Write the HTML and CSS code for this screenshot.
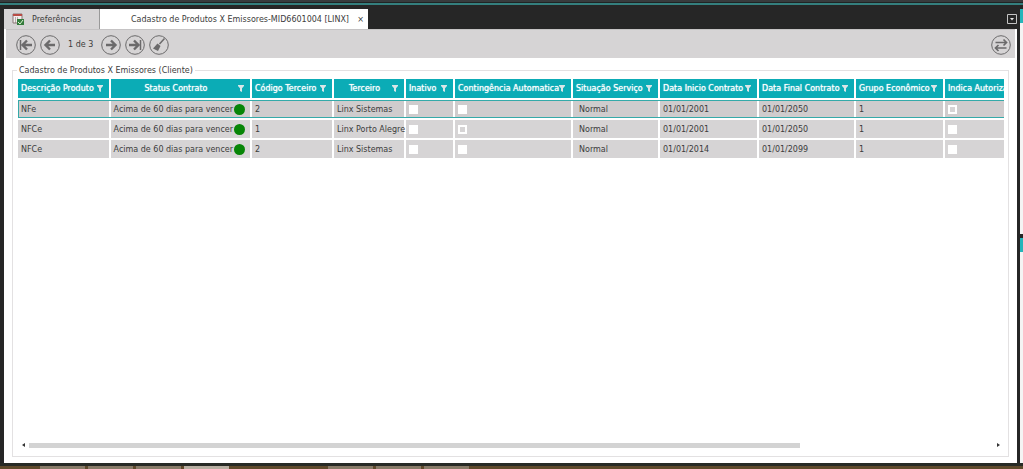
FILE: index.html
```html
<!DOCTYPE html>
<html lang="pt-BR">
<head>
<meta charset="utf-8">
<title>Cadastro de Produtos X Emissores</title>
<link rel="stylesheet" href="styles.css">
</head>
<body>
<svg width="0" height="0" class="defs" aria-hidden="true">
  <symbol id="funnel" viewBox="0 0 6 7"><path d="M0 0h6v1L4 3.200V7L2 6V3.200L0 1z" fill="#d9e6e8"/></symbol>
</svg>
<div class="window-edge"></div>
<div class="workspace">
  <main class="window">
    <nav class="tabs">
      <button class="tab tab-home" type="button">
        <svg class="tab-icon" viewBox="0 0 12 12"><path d="M1 1h9v9H1z" fill="#f2eeee" stroke="#8b7777"/><path d="M1 1h9v2H1z" fill="#b94c45"/><path d="M3 5h1M5 5h1M3 7h1M3 9h1" stroke="#806b6b"/><path d="M5 6h7v6H5z" fill="#347b3c"/><path d="M6 9l2 2 3-4" stroke="#dff5d5" fill="none"/></svg>
        <span>Preferências</span>
      </button>
      <div class="tab tab-active"><span>Cadastro de Produtos X Emissores-MID6601004 [LINX]</span><button class="close" type="button" aria-label="Fechar">×</button></div>
      <button class="tab-menu" type="button" aria-label="Lista de abas"><svg viewBox="0 0 10 10"><path d="M.5.500h9v9h-9z" fill="none" stroke="#c4c4c4"/><path d="M3 4h4L5 6.500z" fill="#e4e4e4"/></svg></button>
    </nav>
    <div class="content">
      <div class="toolbar">
        <button class="round" type="button" aria-label="Primeiro"><svg viewBox="0 0 20 20"><circle cx="10" cy="10" r="9.300"/><path class="thin" d="M4.500 5v10"/><path class="bold" d="M16 10H7M11 5.500L6.500 10l4.500 4.500"/></svg></button>
        <button class="round" type="button" aria-label="Anterior"><svg viewBox="0 0 20 20"><circle cx="10" cy="10" r="9.300"/><path class="bold" d="M15 10H6M10 5.500L5.500 10l4.500 4.500"/></svg></button>
        <span class="counter">1 de 3</span>
        <button class="round" type="button" aria-label="Próximo"><svg viewBox="0 0 20 20"><circle cx="10" cy="10" r="9.300"/><path class="bold" d="M5 10h9M10 5.500l4.500 4.500-4.500 4.500"/></svg></button>
        <button class="round" type="button" aria-label="Último"><svg viewBox="0 0 20 20"><circle cx="10" cy="10" r="9.300"/><path class="thin" d="M15.500 5v10"/><path class="bold" d="M4 10h9M9 5.500l4.500 4.500L9 14.500"/></svg></button>
        <button class="round" type="button" aria-label="Limpar"><svg viewBox="0 0 20 20"><circle cx="10" cy="10" r="9.300"/><path class="thin" d="M15.500 3.500L10.500 9"/><path class="solid" d="M8.500 8.500l3 2.500-2.500 5L4 13.500z"/></svg></button>
        <button class="round swap" type="button" aria-label="Alternar"><svg viewBox="0 0 20 20"><circle cx="10" cy="10" r="9.300"/><path class="mid" d="M4.500 7.500H15M12.500 4.500l3 3-3 3M15.500 13H5M7.500 10l-3 3 3 3"/></svg></button>
      </div>
      <fieldset class="group">
        <legend>Cadastro de Produtos X Emissores (Cliente)</legend>
        <div class="grid-view">
          <table>
            <colgroup><col class="c1"><col class="c2"><col class="c3"><col class="c4"><col class="c5"><col class="c6"><col class="c7"><col class="c8"><col class="c9"><col class="c10"><col class="c11"></colgroup>
            <thead><tr>
              <th><div class="head"><span>Descrição Produto</span><svg><use href="#funnel"/></svg></div></th>
              <th><div class="head centered"><span>Status Contrato</span><svg><use href="#funnel"/></svg></div></th>
              <th><div class="head"><span>Código Terceiro</span><svg><use href="#funnel"/></svg></div></th>
              <th><div class="head centered"><span>Terceiro</span><svg><use href="#funnel"/></svg></div></th>
              <th><div class="head"><span>Inativo</span><svg><use href="#funnel"/></svg></div></th>
              <th><div class="head"><span>Contingência Automatica</span><svg><use href="#funnel"/></svg></div></th>
              <th><div class="head"><span>Situação Serviço</span><svg><use href="#funnel"/></svg></div></th>
              <th><div class="head"><span>Data Inicio Contrato</span><svg><use href="#funnel"/></svg></div></th>
              <th><div class="head"><span>Data Final Contrato</span><svg><use href="#funnel"/></svg></div></th>
              <th><div class="head"><span>Grupo Econômico</span><svg><use href="#funnel"/></svg></div></th>
              <th><div class="head"><span>Indica Autoriza</span></div></th>
            </tr></thead>
            <tbody>
              <tr class="selected"><td>NFe</td><td><div class="status">Acima de 60 dias para vencer<i></i></div></td><td>2</td><td>Linx Sistemas</td><td><input type="checkbox" aria-label="Inativo"></td><td><input type="checkbox" aria-label="Contingência Automatica"></td><td class="indent">Normal</td><td>01/01/2001</td><td>01/01/2050</td><td>1</td><td><input type="checkbox" class="filled" aria-label="Indica Autorização"></td></tr>
              <tr><td>NFCe</td><td><div class="status">Acima de 60 dias para vencer<i></i></div></td><td>1</td><td>Linx Porto Alegre</td><td><input type="checkbox" aria-label="Inativo"></td><td><input type="checkbox" class="filled" aria-label="Contingência Automatica"></td><td class="indent">Normal</td><td>01/01/2001</td><td>01/01/2050</td><td>1</td><td><input type="checkbox" aria-label="Indica Autorização"></td></tr>
              <tr><td>NFCe</td><td><div class="status">Acima de 60 dias para vencer<i></i></div></td><td>2</td><td>Linx Sistemas</td><td><input type="checkbox" aria-label="Inativo"></td><td><input type="checkbox" aria-label="Contingência Automatica"></td><td class="indent">Normal</td><td>01/01/2014</td><td>01/01/2099</td><td>1</td><td><input type="checkbox" aria-label="Indica Autorização"></td></tr>
            </tbody>
          </table>
        </div>
        <div class="scrollbar">
          <button type="button" aria-label="Rolar para a esquerda"><svg viewBox="0 0 3 4"><path d="M3 0v4L0 2z"/></svg></button>
          <div class="track"><div class="thumb"></div></div>
          <button type="button" aria-label="Rolar para a direita"><svg viewBox="0 0 3 4"><path d="M0 0v4l3-2z"/></svg></button>
        </div>
      </fieldset>
    </div>
  </main>
  <aside class="side"><div class="side-panel"></div><div class="side-panel"></div></aside>
</div>
<footer class="taskbar"><i></i><i></i><i></i><i class="current"></i><i class="second"></i><i></i><i></i></footer>
</body>
</html>
```
FILE: styles.css
```css
* { box-sizing: border-box; }
body {
  margin: 0;
  height: 100vh;
  display: flex;
  flex-direction: column;
  overflow: hidden;
  background: #262626;
  color: #3c3c3c;
  font: 8px/13px "DejaVu Sans", Verdana, sans-serif;
}
button { margin: 0; padding: 0; border: 0; background: none; font: inherit; color: inherit; }
svg { display: block; }
.defs { position: absolute; }
.window-edge { flex: none; height: 5px; background: #373b3d; border-bottom: 2px solid #347f7e; box-shadow: inset 0 -1px #202424; }
.workspace { flex: 1; min-height: 0; display: flex; gap: 3px; padding: 4px 0 0 4px; }
.window { flex: 1; min-width: 0; display: flex; flex-direction: column; }

.tabs { display: flex; height: 20px; }
.tab { display: flex; align-items: center; }
.tab-home { width: 96px; padding-left: 8px; gap: 8px; background: #d6d4d5; border-right: 1px solid #999; }
.tab-icon { width: 12px; height: 12px; }
.tab-active { width: 268px; padding: 0 4px 0 31px; justify-content: space-between; background: #fff; }
.close { width: 7px; }
.tab-menu { margin-left: auto; align-self: center; }
.tab-menu svg { width: 10px; height: 10px; }

.content { flex: 1; min-height: 0; display: flex; flex-direction: column; padding: 0 2px; background: #fff; }
.toolbar { flex: none; display: flex; align-items: center; gap: 4px; height: 29px; padding: 1px 4px 0 10px; background: #d6d4d5; border-top: 1px solid #c5c3c4; }
.round svg { width: 20px; height: 20px; fill: none; stroke: #6b6a6b; }
.round .thin { stroke-width: 1.500; }
.round .mid { stroke-width: 1.700; }
.round .bold { stroke-width: 2.400; }
.round .solid { fill: #6b6a6b; stroke: none; }
.counter { padding: 0 4px; }
.swap { margin-left: auto; }

.group { flex: 1; min-width: 0; min-height: 0; margin: 6px; padding: 2px 4px 8px 5px; border: 1px solid #e3e1e2; display: flex; flex-direction: column; }
legend { padding: 0 2px; margin-left: -1px; }
.grid-view { flex: 1; min-height: 0; overflow: hidden; }
table { width: 1120px; table-layout: fixed; border-collapse: separate; border-spacing: 2px; margin: -2px; }
.c1 { width: 91px; }
.c2 { width: 139px; }
.c3 { width: 80px; }
.c4 { width: 70px; }
.c5 { width: 47px; }
.c6 { width: 116px; }
.c7 { width: 85px; }
.c8 { width: 97px; }
.c9 { width: 95px; }
.c10 { width: 87px; }
th { height: 19px; padding: 0 6px 0 3px; background: #0bacb6; color: #fff; font-weight: normal; text-align: left; text-shadow: 0 0 1px #fff; white-space: nowrap; }
.head { display: flex; align-items: center; justify-content: space-between; }
.head svg { flex: none; width: 6px; height: 7px; }
.centered span { flex: 1; text-align: center; }
td { height: 18px; padding: 0 3px; background: #d6d4d5; white-space: nowrap; }
td.indent { padding-left: 6px; }
.selected { outline: 1px solid #35aaa9; outline-offset: -1px; }
.selected td { background: #cfcccd; }
.status { display: flex; align-items: center; justify-content: flex-end; gap: 1px; padding-right: 2px; }
.status i { flex: none; width: 11px; height: 11px; border-radius: 50%; background: #078507; }
input { appearance: none; display: block; width: 9px; height: 9px; margin: 0; background: #fff; }
.filled { border: 2px solid #fff; background: #d6d4d5; }
.scrollbar { flex: none; display: flex; align-items: center; gap: 4px; height: 6px; padding: 0 4px; }
.scrollbar button { width: 3px; }
.scrollbar svg { width: 3px; height: 4px; fill: #333; }
.track { flex: 1; }
.thumb { width: 80%; height: 5px; background: #d3d3d3; }

.side { width: 3px; display: flex; flex-direction: column; gap: 4px; }
.side-panel { flex: 1; background: #f4f4f4; border-top: 14px solid #25b5ba; }
.taskbar { flex: none; display: flex; gap: 3px; height: 6px; padding: 0 0 0 40px; border-top: 3px solid #272a25; background: #5f4a2c; }
.taskbar i { width: 45px; background: #887b68; }
.taskbar .current { background: #b8afa2; }
.taskbar .second { margin-left: 96px; }
```
